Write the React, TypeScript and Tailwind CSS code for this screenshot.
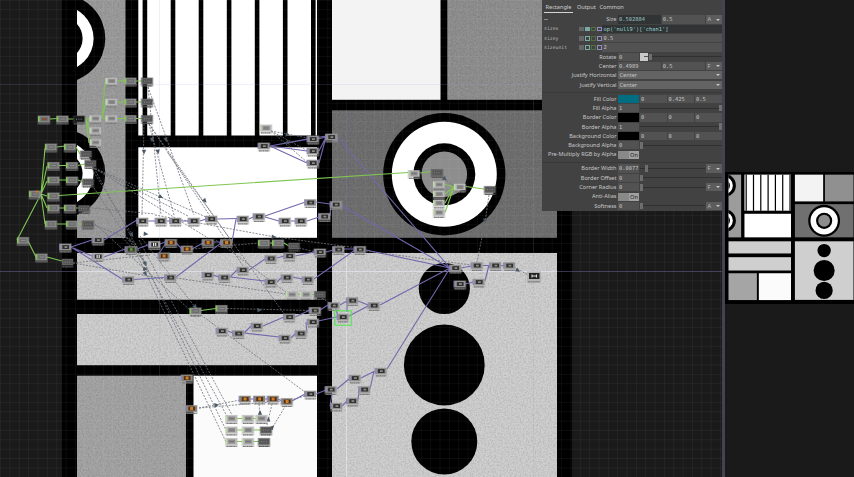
import React from "react";

type Kind = "light" | "chop" | "dark" | "top" | "orange" | "green" | "white" | "noir";
type NodeDef = [number, number, Kind];
type Line = [number, number, number, number];

const nodes: NodeDef[] = [
  [111.5, 81, "light"], [130.5, 81, "chop"], [147, 81, "dark"],
  [111.5, 102, "light"], [130.5, 102, "chop"], [147, 102, "dark"],
  [111.5, 118.5, "light"], [130.5, 118.5, "chop"], [147, 118.5, "dark"],
  [44, 119, "chop"], [62.5, 119, "chop"], [79, 119, "noir"],
  [95.5, 118.5, "light"], [95.5, 130.5, "light"], [95.5, 142.5, "light"],
  [51, 147, "chop"], [70, 147, "chop"], [86, 154, "dark"],
  [53.5, 165.5, "chop"], [72, 165.5, "chop"], [90.5, 163.5, "dark"],
  [53.5, 180, "chop"], [72, 180, "chop"], [88, 182, "dark"],
  [35, 194, "chop"], [53.5, 196, "chop"],
  [53.5, 208, "chop"], [70, 208, "chop"], [84, 208.5, "dark"],
  [51, 224, "chop"], [72, 224, "chop"], [88, 224, "dark"],
  [23, 240.5, "chop"], [41.5, 257, "chop"], [67.5, 262, "dark"],
  [65.5, 247, "top"], [98, 240, "top"], [98, 256.5, "white"], [131, 249.5, "green"],
  [154.5, 244.5, "white"], [171, 242.5, "orange"], [164, 256, "orange"], [187, 249, "orange"],
  [208, 242.5, "orange"], [226.5, 242.5, "orange"],
  [142.5, 221, "top"], [161, 221, "top"], [175.5, 221, "top"], [194, 221, "top"],
  [211.5, 219, "top"], [243, 219, "top"], [259, 216.5, "top"], [285, 221, "top"],
  [301, 221, "top"], [324.5, 216.5, "top"], [310.5, 202.5, "top"], [336, 204.5, "top"],
  [266, 128, "light"], [264, 146, "top"], [313, 139, "top"], [313, 151, "top"], [313, 163, "top"], [331.5, 137, "top"],
  [264, 243, "chop"], [278, 243, "chop"], [294, 246, "dark"],
  [128.5, 279.5, "top"], [170.5, 277.5, "top"], [208, 275, "top"], [224.5, 277.5, "top"],
  [243, 270, "top"], [271, 258.5, "top"], [289.5, 256, "top"], [320, 252, "top"],
  [338.5, 249.5, "top"], [360, 249.5, "top"], [271, 282, "top"], [287, 277.5, "top"], [308, 279.5, "top"],
  [292, 294.5, "light"], [306, 294.5, "light"], [320, 294.5, "dark"],
  [195.5, 311, "chop"], [221.5, 308.5, "chop"], [315, 310.5, "top"], [334, 305.5, "top"],
  [352.5, 300.5, "top"], [374, 305.5, "top"], [343, 317, "top"], [289.5, 317, "top"], [313, 322, "top"],
  [222, 331, "top"], [238.5, 333.5, "top"], [257, 326, "top"], [285, 338, "top"], [301, 333.5, "top"],
  [187, 378, "orange"], [191.5, 408.5, "orange"], [245, 399, "orange"], [259.5, 399, "orange"],
  [273, 399, "orange"], [287, 401.5, "orange"], [310.5, 394, "top"], [331, 389.5, "top"],
  [355, 378, "top"], [381, 371, "top"], [364.5, 389.5, "top"], [336.5, 406, "top"], [352.5, 401, "top"],
  [231.5, 418.5, "light"], [248, 418.5, "light"], [261.5, 418.5, "light"],
  [231.5, 430, "light"], [248, 430, "light"], [266, 430, "dark"],
  [231.5, 441.5, "light"], [248, 441.5, "light"], [264, 441.5, "dark"],
  [414, 173.5, "light"], [437, 172.5, "dark"], [439, 184.5, "light"], [439, 194, "light"],
  [439, 203, "light"], [439, 212.5, "light"], [460, 187, "light"], [490, 189.5, "dark"],
  [455.5, 268, "top"], [477, 265.5, "top"], [495.5, 265.5, "top"], [509.5, 265.5, "top"],
  [460, 284, "top"], [479, 282, "top"],
];

const greenWires: Line[] = [
  [117, 81, 125, 80.5], [136, 81, 142, 81], [117, 102, 125, 102], [136, 102, 142, 102],
  [117, 118.5, 125, 118.5], [136, 118.5, 142, 118.5], [102, 118, 105, 82], [102, 118, 106, 102], [102, 118.5, 106, 118.5],
  [50, 119, 57, 118.5], [68, 119, 74, 119], [86, 119, 90, 118.5], [86, 119, 90, 131], [86, 119, 89, 143],
  [41, 194, 45, 148], [41, 194, 47, 166], [41, 194, 47, 181], [41, 194, 47, 196], [41, 194, 47, 208], [41, 194, 45, 224],
  [41, 194, 17, 240], [28, 241, 36, 257], [47, 257, 62, 261],
  [57, 147, 65, 146], [76, 147, 80, 154], [59, 165.5, 66, 165.5], [78, 165.5, 85, 164],
  [59, 180, 66, 180], [78, 180, 83, 182], [59, 208, 64, 208], [76, 208, 79, 208], [57, 224, 66, 224], [78, 224, 83, 224],
  [59, 195.5, 408, 172.5], [420, 173, 431, 171.5], [445, 184.5, 454, 187], [445, 194, 454, 187], [445, 203, 454, 187],
  [445, 212.5, 454, 187], [466, 186.5, 484, 189],
  [270, 243, 272, 243], [284, 243, 289, 246], [298, 294.5, 300, 294.5], [312, 294.5, 315, 294.5],
  [201, 310.5, 216, 308.5], [237, 418.5, 242, 418.5], [253, 418.5, 257, 418.5],
  [237, 430, 242, 430], [253, 430, 261, 430], [237, 441.5, 242, 441.5], [253, 441.5, 259, 441.5],
];

const purpleWires: Line[] = [
  [71, 247, 92, 240], [71, 247, 92, 256], [71, 247, 122, 279], [104, 240, 137, 220], [104, 257, 125, 249],
  [137, 249, 148, 245], [160, 244, 165, 242], [166, 243, 158, 255], [176, 243, 182, 249], [192, 249, 203, 243],
  [214, 242, 221, 242], [148, 221, 155, 221], [167, 221, 170, 221], [181, 221, 188, 221], [200, 221, 206, 219],
  [217, 219, 237, 218.5], [249, 219, 253, 217], [265, 216, 304, 202.5], [265, 217, 279, 221], [291, 221, 295, 221],
  [307, 221, 319, 217], [316, 202, 330, 204], [330, 216, 331, 204], [232, 242, 236, 219],
  [270, 146, 307, 139], [270, 146, 307, 151], [270, 146, 307, 163], [318, 139, 326, 137], [319, 151, 326, 137], [319, 163, 326, 137],
  [270, 146, 326, 136], [134, 279.5, 164, 277.5], [176, 277, 221, 243], [213, 275, 219, 277], [230, 277, 237, 270],
  [249, 270, 265, 259], [230, 277, 265, 281], [277, 258, 284, 256], [295, 256, 314, 252], [326, 252, 333, 250],
  [344, 249, 354, 249], [277, 282, 281, 278], [293, 277, 302, 279], [314, 279, 355, 250],
  [320, 310, 328, 305], [340, 305, 347, 301], [358, 301, 368, 305], [349, 316, 368, 306], [338, 316, 335, 306], [347, 312, 347, 302],
  [228, 331, 233, 333], [244, 333, 251, 326], [263, 326, 284, 317], [244, 333, 279, 337], [291, 338, 295, 334],
  [295, 317, 310, 310], [307, 333, 306, 322], [318, 321, 337, 317],
  [250, 399, 254, 399], [265, 399, 268, 399], [278, 399, 282, 401], [292, 401, 305, 394], [316, 394, 326, 390],
  [337, 389, 349, 379], [361, 378, 375, 371], [332, 394, 330, 406], [342, 406, 347, 401], [358, 401, 359, 390], [370, 389, 374, 371],
  [337, 137, 450, 268], [342, 206, 450, 268], [366, 250, 450, 268], [380, 305, 450, 268], [387, 369, 450, 268],
  [461, 268, 471, 266], [483, 265.5, 489, 265.5], [501, 265.5, 504, 265.5], [465, 284, 473, 282], [485, 281, 489, 265],
];

const dashedWires: Line[] = [
  [144, 124, 142, 215], [148, 87, 161, 215], [149, 124, 174, 215], [148, 87, 194, 215], [149, 124, 230, 239],
  [149, 124, 245, 269], [92, 167, 206, 217], [92, 167, 188, 216], [92, 167, 208, 238], [92, 169, 133, 236], [92, 185, 130, 242],
  [92, 208, 155, 214], [92, 224, 132, 240], [155, 215, 275, 237], [275, 237, 358, 248], [95, 224, 190, 310],
  [94, 168, 146, 264], [73, 263, 150, 255], [73, 263, 165, 279], [176, 278, 286, 294],
  [132, 241, 228, 418], [135, 243, 226, 430], [130, 240, 226, 442], [139, 240, 232, 415],
  [140, 236, 195, 307], [201, 315, 305, 392], [216, 240, 287, 293], [168, 153, 285, 315],
  [120, 235, 147, 264], [227, 308.5, 309, 310.5], [199, 408, 282, 401], [199, 408, 240, 400],
  [192, 249, 259, 243], [284, 402, 305, 396], [271, 131, 308, 138], [271, 131, 308, 151], [271, 131, 308, 163],
  [441, 177, 454, 186], [489, 195, 485, 222], [485, 222, 477, 262], [366, 251, 471, 265], [514, 267, 528, 275],
  [260, 416, 259, 403], [267, 425, 272, 404], [271, 430, 286, 405], [299, 248, 316, 252],
  [322, 298, 331, 304],
];

const arrows: [number, number, number][] = [
  [144, 152, 90], [152, 140, 90], [158, 152, 80], [166, 140, 75], [161, 197, 25], [205, 201, 50], [132, 235, 60],
  [146, 234, 5], [274, 237, 5], [145.5, 264, 60], [145.5, 269, 10], [145.5, 274, 60], [216.7, 405, -5],
  [260, 412.5, -90], [268.5, 419, -80], [272.5, 427, -50], [259.7, 310, 0], [195.5, 307, 50], [288, 135, 15],
  [288, 143, 45], [445, 179, 40], [518, 270.5, 30], [485, 221, 95],
];

const thumbs: Record<Kind, string> = {
  light: "#8b8b8b", chop: "#6c6c6c", dark: "#555555", top: "#303030",
  orange: "#463221", green: "#303a20", white: "#262626", noir: "#161616",
};

const frames: Record<Kind, string> = {
  light: "#b8b8b8", chop: "#858585", dark: "#626262", top: "#929292",
  orange: "#8b8278", green: "#777777", white: "#a4a4a4", noir: "#252525",
};

function Artwork({ grain }: { grain?: string }) {
  return (
    <g>
      <rect x="62" y="-18" width="510" height="512" fill="#000" />
      <rect x="77" y="-3" width="48.5" height="241" fill="#9c9c9c" />
      <rect x="77" y="253" width="240" height="46.7" fill="#cecece" />
      <rect x="77" y="314" width="240" height="51.2" fill="#cfcfcf" />
      <rect x="77" y="375.7" width="109" height="103" fill="#a5a5a5" />
      <rect x="447.3" y="-3" width="109.7" height="102.8" fill="#909090" />
      <rect x="332" y="110.3" width="225" height="127.5" fill="#707070" />
      <rect x="332" y="253" width="225" height="225" fill="#cfcfcf" />
      {grain && <rect x="62" y="-3" width="510" height="481" filter={`url(#${grain})`} opacity="0.11" />}
      <svg x="77" y="-3" width="48" height="241" viewBox="77 -3 48 241">
        {[38.5, 173.5].map((cy) => (
          <g key={cy}>
            <circle cx="61" cy={cy} r="44.3" fill="#000" />
            <circle cx="61" cy={cy} r="32.6" fill="#fff" />
            <circle cx="61" cy={cy} r="21.6" fill="#000" />
          </g>
        ))}
      </svg>
      <rect x="138.3" y="-3" width="178.7" height="138.5" fill="#fff" />
      {[142.6, 170.7, 198.7, 226.8, 254.8, 282.9, 311].map((x) => (
        <rect key={x} x={x} y="-3" width="4.6" height="139" fill="#000" />
      ))}
      <rect x="138.3" y="147.3" width="178.7" height="90.5" fill="#fff" />
      <rect x="193.5" y="375.7" width="123.5" height="103" fill="#fbfbfb" />
      <rect x="332" y="-3" width="108.5" height="102.8" fill="#f3f3f3" />
      <circle cx="444.3" cy="174.3" r="61.2" fill="#000" />
      <circle cx="444.3" cy="174.3" r="52.5" fill="#fff" />
      <circle cx="444.3" cy="174.3" r="31" fill="#000" />
      <circle cx="444.3" cy="174.3" r="22.8" fill="#8d8d8d" />
      <circle cx="444.3" cy="288.5" r="25.6" fill="#000" />
      <circle cx="444.3" cy="365" r="40.4" fill="#000" />
      <circle cx="444.3" cy="441.5" r="33" fill="#000" />
    </g>
  );
}

function OpNode({ x, y, kind }: { x: number; y: number; kind: Kind }) {
  const isChop = kind === "chop" || kind === "light";
  const isDark = kind === "dark" || kind === "noir";
  return (
    <g transform={`translate(${x} ${y})`}>
      <rect x="-6.4" y="-3.6" width="12.8" height="9" fill={isDark ? "#444" : "#aaaaaa"} opacity="0.4" />
      <rect x="-5.5" y="-3.1" width="11" height="6.3" fill={frames[kind]} />
      <rect x={isDark ? -4 : -3.2} y="-1.9" width={isDark ? 9 : 6.8} height="3.9" fill={thumbs[kind]} />
      {isChop && <rect x="-6" y="-2.8" width="1.4" height="5.6" fill={kind === "chop" ? "#80c850" : "#c1dda9"} />}
      {isChop && <path d="M-2 0H2.5" stroke={kind === "chop" ? "#9b9b9b" : "#6d6d6d"} strokeWidth="0.7" />}
      {isDark && <path d="M-3 0.2H4" stroke="#858585" strokeWidth="1" strokeDasharray="1 1.3" />}
      {!isChop && !isDark && <rect x="-6.3" y="-3" width="1" height="6" fill="#8580bb" />}
      {kind === "top" && <rect x="-1" y="-0.8" width="2.8" height="1.8" fill="#8c8780" />}
      {kind === "orange" && <rect x="-1.4" y="-1.5" width="3" height="3" fill="#d87a1e" />}
      {kind === "green" && <rect x="-1" y="-1.4" width="2.6" height="2.8" fill="#5b9c37" />}
      {kind === "white" && <path d="M-.9 -1.5V1.5M1.2 -1.5V1.5" stroke="#eee" strokeWidth="1.2" />}
      <path d="M-5 4.8H5.2" stroke={isDark || kind === "chop" ? "#555" : "#777"} strokeWidth="1.2" strokeDasharray="1.8 .4 1.1 .3" />
    </g>
  );
}

function Wires({ lines, className, dash }: { lines: Line[]; className: string; dash?: string }) {
  return (
    <path
      className={className}
      fill="none"
      strokeDasharray={dash}
      d={lines.map(([a, b, c, d]) => `M${a} ${b}L${c} ${d}`).join("")}
    />
  );
}

function NetworkEditor() {
  const cols = Array.from({ length: 78 }, (_, i) => 0.5 + ((346.5 - 0.5) % 9.35) + i * 9.35);
  const rows = Array.from({ length: 51 }, (_, i) => (271.5 % 9.35) + i * 9.35);
  return (
    <svg className="block h-[477px] w-[722px]" viewBox="0 0 722 477">
      <defs>
        <filter id="grain" x="0" y="0" width="100%" height="100%">
          <feTurbulence type="fractalNoise" baseFrequency="0.6" numOctaves="2" seed="4" />
          <feColorMatrix values="0 0 0 0 0  0 0 0 0 0  0 0 0 0 0  2.2 0 0 0 -0.8" />
        </filter>
      </defs>
      <rect width="722" height="477" fill="#1a1a1a" />
      <Artwork grain="grain" />
      <path d={cols.map((x) => `M${x} 0V477`).join("") + rows.map((y) => `M0 ${y}H722`).join("")} stroke="#fff" strokeOpacity="0.055" strokeWidth="0.9" />
      <path d="M0 84.5H722M159.5 0V477M533.5 0V477" stroke="#7f86c8" strokeOpacity="0.12" />
      <path d="M0 271.5H77M317 271.5H332M557 271.5H722M346.5 110V238" stroke="#6f70a8" strokeOpacity="0.4" />
      <path d="M77 271.5H317M332 271.5H557M346.5 253V477" stroke="#f0f0ff" strokeOpacity="0.5" />
      <Wires lines={dashedWires} className="stroke-[#6c7078] stroke-[0.8]" dash="2 1.3" />
      <Wires lines={purpleWires} className="stroke-[#7168ac] stroke-[1.1]" />
      <Wires lines={greenWires} className="stroke-[#80c654] stroke-[1.1]" />
      {arrows.map(([x, y, r], i) => (
        <path key={i} transform={`translate(${x} ${y}) rotate(${r})`} d="M-2.3 -2.2L2.4 0L-2.3 2.2Z" fill="#4b5965" />
      ))}
      {nodes.map(([x, y, kind], i) => (
        <OpNode key={i} x={x} y={y} kind={kind} />
      ))}
      <rect x="36" y="190.6" width="2" height="2" fill="#d57422" />
      <rect x="42" y="118.3" width="5" height="1.5" fill="#844a2d" />
      <g>
        <rect x="527" y="271.5" width="14" height="11.5" fill="#b4b4b4" />
        <rect x="529" y="273" width="10.5" height="6" fill="#222" />
        <path d="M532 276H536.5M532 274.5V277.5M536.5 274.5V277.5" stroke="#ddd" strokeWidth="1.1" />
        <path d="M528 281.8H540" stroke="#777" strokeDasharray="2 .4" />
      </g>
      <rect x="334.7" y="310.8" width="16.6" height="14.4" fill="none" stroke="#54e654" strokeWidth="1.1" />
    </svg>
  );
}

function Row({ label, children }: { label: string; children: React.ReactNode }) {
  return (
    <div className="flex h-[9.3px] items-center">
      <div className="w-[74.5px] shrink-0 whitespace-nowrap text-right text-[#c8c8c8]">{label}</div>
      <div className="ml-[1.5px] flex w-[103.5px] items-center gap-px">{children}</div>
    </div>
  );
}

const mono = "font-['DejaVu_Sans_Mono',monospace] text-[5.4px]";

function Field({ value, className = "flex-1", tone = "bg-[#525252] text-[#c6c6c6]" }: { value: string; className?: string; tone?: string }) {
  return <div className={`h-[8.4px] pl-px leading-[8.4px] ${mono} ${tone} ${className}`}>{value}</div>;
}

function Caret() {
  return <span className="h-0 w-0 border-x-[2px] border-t-[2px] border-x-transparent border-t-[#c8c8c8]" />;
}

function Unit({ value }: { value: string }) {
  return (
    <div className="flex h-[8.4px] w-[16px] shrink-0 items-center justify-between bg-[#5c5c5c] px-[2px] leading-[8.4px] text-[#b8b8b8]">
      <span>{value}</span>
      <Caret />
    </div>
  );
}

function Slider({ at }: { at: "start" | "low" | "end" }) {
  return (
    <div className="relative flex h-[8px] flex-1 items-center">
      <div className="h-px w-full bg-[#303030]" />
      <div className={`absolute h-[6.5px] w-[3px] bg-[#6f6f6f] ${at === "end" ? "right-0" : at === "low" ? "left-[5px]" : "left-0"}`} />
    </div>
  );
}

function Menu({ value }: { value: string }) {
  return (
    <div className="flex h-[8px] flex-1 items-center justify-between bg-[#636363] pl-[1.5px] pr-[2px] leading-[8px] text-[#c4c4c4]">
      <span>{value}</span>
      <Caret />
    </div>
  );
}

function Toggle() {
  return (
    <div className="flex h-[8px] w-[21px] bg-[#898989] leading-[8px]">
      <span className="ml-auto w-[10px] bg-[#a0a0a0] text-center text-[#222]">On</span>
    </div>
  );
}

function ColorRow({ label, swatch, values }: { label: string; swatch: string; values: string[] }) {
  return (
    <Row label={label}>
      <div className={`h-[8.4px] w-[21px] shrink-0 ${swatch}`} />
      {values.map((v, i) => <Field key={i} value={v} />)}
    </Row>
  );
}

function NumberRow({ label, value, at, unit }: { label: string; value: string; at: "start" | "low" | "end"; unit?: string }) {
  return (
    <Row label={label}>
      <Field value={value} className="w-[21px] shrink-0" />
      <Slider at={at} />
      {unit && <Unit value={unit} />}
    </Row>
  );
}

function ExprRow({ name, value, active }: { name: string; value: string; active?: boolean }) {
  return (
    <div className={`flex h-[9.3px] items-center ${mono}`}>
      <span className="w-[37px] pl-[2px] text-[4.8px] text-[#b8b8b8]">{name}</span>
      <div className="flex h-[7px] w-[23px] items-center gap-[1.2px]">
        <span className="h-[4.8px] w-[4.8px] bg-[#656565]" />
        <span className={`h-[4.8px] w-[4.8px] border border-[#78aaa7] ${active ? "bg-[#78aaa7]" : ""}`} />
        <span className="h-[4.8px] w-[4.8px] border border-[#527039]" />
        <span className="h-[4.8px] w-[4.8px] border border-[#958dc2]" />
      </div>
      <span className={`h-[8.4px] w-[119.5px] pl-[1.5px] leading-[8.4px] ${active ? "bg-[#303434] text-[#9ad6d6]" : "bg-[#525252] text-[#c6c6c6]"}`}>{value}</span>
    </div>
  );
}

function ParameterPanel() {
  return (
    <div className="absolute left-[542px] top-0 h-[210.5px] w-[180px] overflow-hidden bg-[#424242] font-['Noto_Sans',sans-serif] text-[5.6px]">
      <div className="flex h-[12.5px] items-end gap-[4px] pl-[2px] leading-[7px] text-[#cfcfcf]">
        <span className="h-[8.5px] w-[29px] whitespace-nowrap border-b border-[#d4d4d4] pl-[1.5px]">Rectangle</span>
        <span className="h-[8.5px] w-[18.5px]">Output</span>
        <span className="h-[8.5px]">Common</span>
      </div>
      <div className="mt-[2.5px]">
        <div className="relative">
          <span className="absolute left-[2px] top-[4px] h-px w-[4px] bg-[#8a8a8a]" />
          <Row label="Size">
            <Field value="0.502884" tone="bg-[#303434] text-[#9ec4c4]" />
            <Field value="0.5" />
            <Unit value="A" />
          </Row>
        </div>
        <ExprRow name="sizex" value="op('null9')['chan1']" active />
        <ExprRow name="sizey" value="0.5" />
        <ExprRow name="sizeunit" value="2" />
        <Row label="Rotate">
          <Field value="0" className="w-[21px] shrink-0" />
          <div className="flex h-[8px] w-[8px] shrink-0 items-center justify-end bg-[#c9c9c9]">
            <span className="h-px w-[4px] bg-[#555]" />
          </div>
          <Slider at="start" />
        </Row>
        <Row label="Center"><Field value="0.4989" /><Field value="0.5" /><Unit value="F" /></Row>
        <Row label="Justify Horizontal"><Menu value="Center" /></Row>
        <Row label="Justify Vertical"><Menu value="Center" /></Row>
      </div>
      <div className="mt-[2.4px] border-t border-[#393939] pt-[1.4px]">
        <ColorRow label="Fill Color" swatch="bg-[#006d80]" values={["0", "0.425", "0.5"]} />
        <NumberRow label="Fill Alpha" value="1" at="end" />
        <ColorRow label="Border Color" swatch="bg-black" values={["0", "0", "0"]} />
        <NumberRow label="Border Alpha" value="1" at="end" />
        <ColorRow label="Background Color" swatch="bg-black" values={["0", "0", "0"]} />
        <NumberRow label="Background Alpha" value="0" at="start" />
        <Row label="Pre-Multiply RGB by Alpha"><Toggle /></Row>
      </div>
      <div className="mt-[2.4px] border-t border-[#393939] pt-[1.4px]">
        <NumberRow label="Border Width" value="0.0077" at="low" unit="F" />
        <NumberRow label="Border Offset" value="0" at="start" />
        <NumberRow label="Corner Radius" value="0" at="start" unit="F" />
        <Row label="Anti-Alias"><Toggle /></Row>
        <NumberRow label="Softness" value="0" at="start" unit="A" />
      </div>
    </div>
  );
}

export default function App() {
  return (
    <div className="flex h-[477px] w-[854px] overflow-hidden bg-[#1a1a1a]">
      <main className="relative w-[722px] shrink-0">
        <NetworkEditor />
        <ParameterPanel />
      </main>
      <div className="w-[2.5px] shrink-0 bg-[#45434f]" />
      <aside className="flex-1 bg-[#1a1a1a] pt-[172px]">
        <svg className="block h-[132px] w-full" viewBox="724.5 172 129.5 132">
          <rect x="725" y="172" width="130" height="132" fill="#000" />
          <g transform="translate(728 241.3) scale(.2604) translate(-77 -253)">
            <Artwork />
          </g>
        </svg>
      </aside>
    </div>
  );
}
